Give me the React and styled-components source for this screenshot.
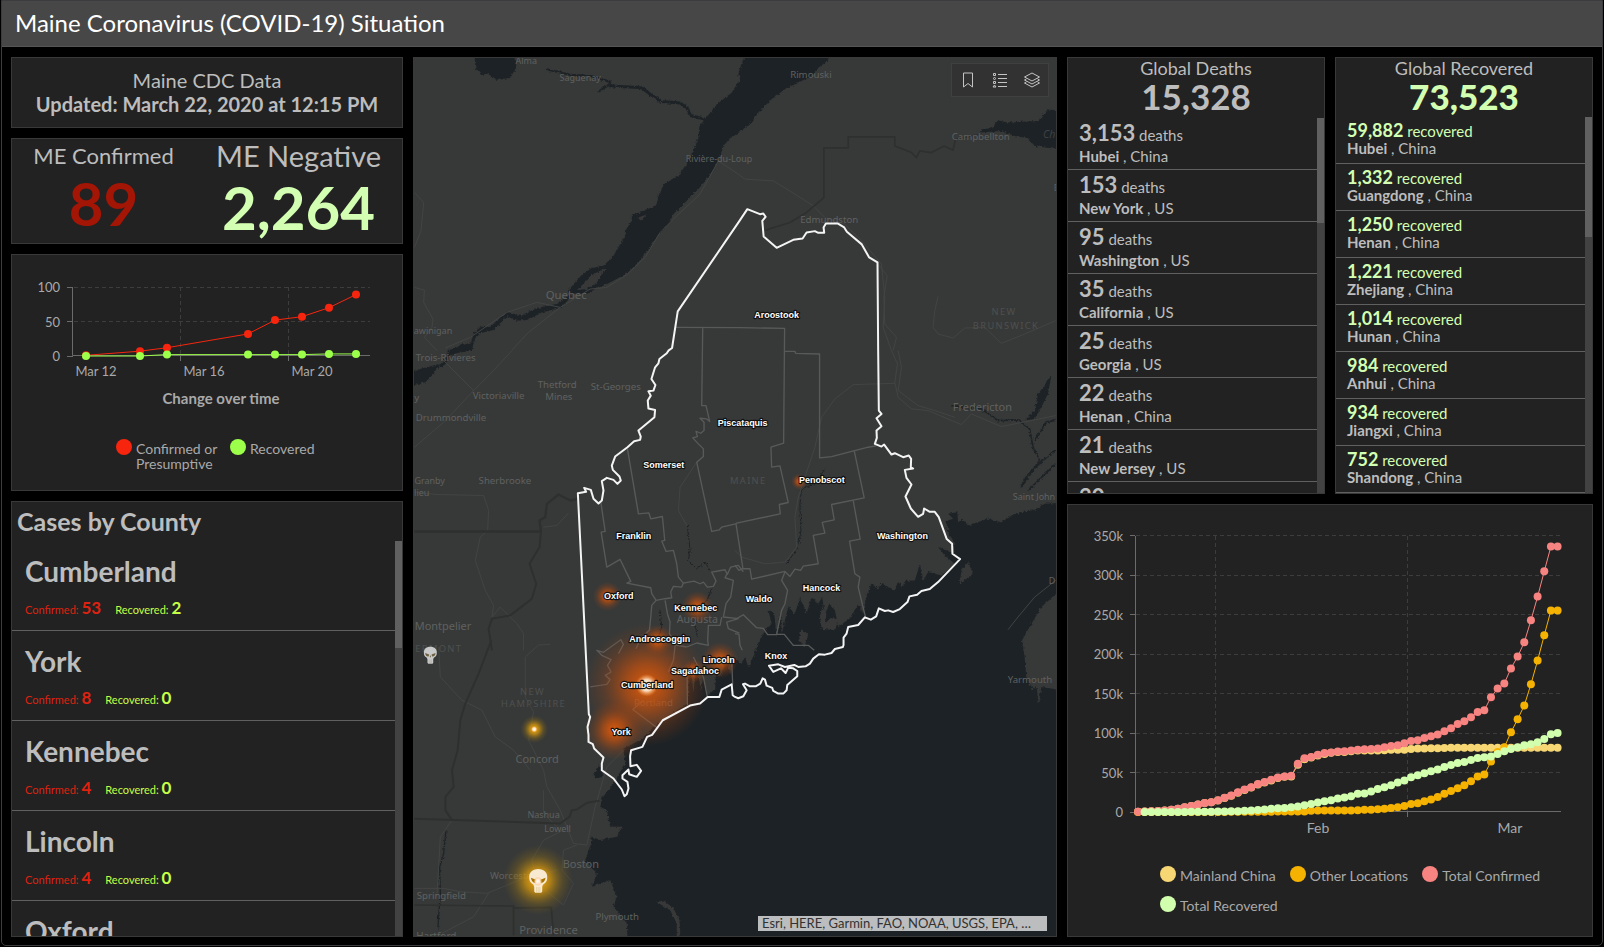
import React from "react";
import styled, { createGlobalStyle, css } from "styled-components";

const GlobalStyle = createGlobalStyle`
  *, *::before, *::after { box-sizing: border-box; }
  body {
    margin: 0;
    background: #000;
    color: #bdbdbd;
    font-family: Lato, "Open Sans", sans-serif;
  }
  h1, h2, h3, p, ul { margin: 0; padding: 0; font-weight: 400; }
  ul { list-style: none; }
`;

/* ---------- page frame ---------- */

const Page = styled.div`
  display: flex;
  height: 100vh;
  min-height: 720px;
  padding: 0 1px 1px;
  background: #000;
`;

const Frame = styled.div`
  flex: 1;
  min-width: 0;
  display: flex;
  flex-direction: column;
  border: 1px solid #3c3c3e;
  border-radius: 0 0 5px 5px;
  overflow: hidden;
`;

const Header = styled.header`
  flex: none;
  padding: 0 13px 2px;
  background: #474747;
  border-bottom: 1px solid #555;
`;

const PageTitle = styled.h1`
  color: #fff;
  font-size: 24px;
  line-height: 43px;
`;

const Board = styled.main`
  flex: 1;
  min-height: 0;
  display: grid;
  grid-template-columns: minmax(0, 392fr) minmax(0, 644fr) minmax(0, 526fr);
  gap: 10px;
  padding: 10px 9px 8px;
`;

const Column = styled.div`
  display: grid;
  grid-template-rows: ${(p) => p.$rows};
  gap: 10px;
  min-height: 0;
`;

const Split = styled.div`
  display: grid;
  grid-template-columns: minmax(0, 1fr) minmax(0, 1fr);
  gap: 10px;
  min-height: 0;
`;

const Panel = styled.section`
  display: flex;
  flex-direction: column;
  min-width: 0;
  min-height: 0;
  overflow: hidden;
  background: #222;
  border: 1px solid #393939;
`;

/* ---------- summary panels ---------- */

const UpdatedPanel = styled(Panel)`
  justify-content: center;
  padding-bottom: 2px;
  text-align: center;
`;

const SummaryText = styled.p`
  font-size: 20px;
  line-height: 24px;
  font-weight: ${(p) => (p.$strong ? 700 : 400)};
`;

const CountsPanel = styled(Panel)`
  flex-direction: row;
  padding-top: 3px;
`;

const Count = styled.div`
  flex: ${(p) => p.$share} 1 0;
  text-align: center;
`;

const CountLabel = styled.h2`
  font-size: ${(p) => (p.$large ? 29 : 22)}px;
  line-height: 28px;
`;

const CountValue = styled.p`
  font-size: 60px;
  font-weight: 700;
  line-height: ${(p) => (p.$large ? 74 : 66)}px;
  color: ${(p) => p.$color};
`;

/* ---------- scrolling lists ---------- */

const ScrollArea = styled.div`
  flex: 1;
  min-height: 0;
  display: flex;
`;

const Rows = styled.ul`
  flex: 1;
  min-width: 0;
  overflow: hidden;
`;

const Track = styled.div`
  flex: none;
  width: 7px;
  background: #424242;
`;

const Thumb = styled.div`
  height: ${(p) => p.$size}%;
  background: #606060;
`;

const ListTitle = styled.h2`
  flex: none;
  padding: 0 5px;
  font-size: 25px;
  font-weight: 700;
  line-height: 39px;
`;

const CountyRow = styled.li`
  padding: 13px 13px 10px;
  border-bottom: 1px solid #606060;
`;

const CountyName = styled.h3`
  font-size: 28px;
  font-weight: 700;
  line-height: 34px;
`;

const CountyStats = styled.p`
  display: flex;
  align-items: baseline;
  gap: 14px;
  margin-top: 12px;
  font-size: 11px;
  line-height: 20px;
`;

const Stat = styled.span`
  color: ${(p) => p.$color};
  b { font-size: 17px; line-height: 0; font-weight: 700; }
`;

const TotalHead = styled.div`
  flex: none;
  text-align: center;
  padding-bottom: ${(p) => (p.$compact ? 3 : 4)}px;
`;

const TotalLabel = styled.h2`
  font-size: 18px;
  line-height: 20px;
`;

const TotalValue = styled.p`
  font-size: 35px;
  line-height: 36px;
  font-weight: ${(p) => (p.$heavy ? 900 : 700)};
  color: ${(p) => p.$color};
`;

const compactRow = css`
  padding: 5px 11px 6px;
  line-height: 17px;
`;

const roomyRow = css`
  padding: 5px 11px 4px;
  line-height: 18px;
`;

const PlaceRow = styled.li`
  ${(p) => (p.$compact ? compactRow : roomyRow)}
  border-bottom: 1px solid #606060;
  font-size: 15px;
  white-space: nowrap;
`;

const PlaceCount = styled.p`
  font-size: 15px;
  line-height: ${(p) => (p.$compact ? 18 : 24)}px;
  color: ${(p) => p.$color};
  b { font-size: ${(p) => (p.$compact ? 18 : 22)}px; line-height: 0; }
`;

/* ---------- charts ---------- */

const Chart = styled.svg`
  flex: 1;
  min-height: 0;
  width: 100%;
  display: block;
  font-size: 13px;
  fill: #a9a9a9;
`;

const Legend = styled.ul`
  flex: none;
  display: flex;
  flex-wrap: wrap;
  gap: 0 ${(p) => p.$gap}px;
  padding: ${(p) => p.$pad};
  font-size: 14px;
  line-height: 15px;
  color: #a9a9a9;
`;

const LegendItem = styled.li`
  display: flex;
  gap: 4px;
  width: ${(p) => p.$width};
  min-height: 30px;
  span { padding-top: 2px; }
`;

const Dot = styled.i`
  flex: none;
  width: 16px;
  height: 16px;
  border-radius: 50%;
  background: ${(p) => p.$color};
`;

/* ---------- map ---------- */

const MapPanel = styled(Panel)`
  position: relative;
  background: #373938;
`;

const MapDrawing = styled.svg`
  width: 100%;
  height: 100%;
  display: block;
`;

const MapTools = styled.div`
  position: absolute;
  top: 5px;
  right: 7px;
  display: flex;
  background: #323232;
  border: 1px solid #404040;
`;

const ToolButton = styled.button`
  display: grid;
  place-items: center;
  width: 32px;
  height: 32px;
  padding: 0;
  border: 0;
  background: transparent;
  color: #c4c4c4;
`;

const Attribution = styled.p`
  position: absolute;
  right: 9px;
  bottom: 5px;
  width: 289px;
  padding: 0 4px;
  overflow: hidden;
  background: #bcbdbe;
  color: #323232;
  font-size: 13px;
  line-height: 15px;
  white-space: nowrap;
`;

/* ---------- data ---------- */

const counties = [
  ["Cumberland", 53, 2],
  ["York", 8, 0],
  ["Kennebec", 4, 0],
  ["Lincoln", 4, 0],
  ["Oxford", 4, 0],
];

const deaths = [
  ["3,153", "Hubei", "China"],
  ["153", "New York", "US"],
  ["95", "Washington", "US"],
  ["35", "California", "US"],
  ["25", "Georgia", "US"],
  ["22", "Henan", "China"],
  ["21", "New Jersey", "US"],
  ["20", "Louisiana", "US"],
];

const recovered = [
  ["59,882", "Hubei", "China"],
  ["1,332", "Guangdong", "China"],
  ["1,250", "Henan", "China"],
  ["1,221", "Zhejiang", "China"],
  ["1,014", "Hunan", "China"],
  ["984", "Anhui", "China"],
  ["934", "Jiangxi", "China"],
  ["752", "Shandong", "China"],
];

const stateDays = [0, 2, 3, 6, 7, 8, 9, 10];
const stateConfirmed = [1, 7, 12, 32, 52, 57, 70, 89];
const stateRecovered = [0, 0, 2, 2, 2, 2, 3, 3];

const totalConfirmed = [
  0.3, 0.5, 0.9, 1.4, 2, 2.8, 4, 6, 7.5, 9.5, 11.4, 12.5, 14.8, 18, 21, 25, 28.5, 31.5, 35.5, 38, 41, 43.8,
  45, 46, 61, 68, 69.6, 72.5, 74.7, 75.5, 76.8, 77, 78, 79, 79.6, 80, 80.6, 82, 83.5, 84.5, 87, 90, 91, 93.7,
  96, 98.3, 102.5, 106, 111.4, 115, 120, 126.6, 129, 145.5, 156.5, 163, 182, 197, 215, 243, 273, 305, 336.5, 336.5,
];
const mainlandChina = [
  0.3, 0.5, 0.9, 1.4, 2, 2.8, 4, 6, 7.5, 9.5, 11.4, 12.5, 14.6, 17.6, 20.6, 24.5, 28, 31, 35, 37.5, 40, 43,
  44.6, 45, 60, 67, 69, 71.5, 73.5, 75, 76, 76.2, 77, 77.8, 78, 78, 78, 78.3, 79, 79, 79, 80, 80.5, 80.5,
  80.7, 80.7, 81, 81.3, 81.3, 81.3, 81.3, 81.3, 81.3, 81.3, 81.3, 81.3, 81.3, 81.3, 81.3, 81.3, 81.3, 81.3, 81.3, 81.3,
];
const otherLocations = [
  0, 0, 0, 0, 0, 0, 0, 0, 0, 0, 0, 0, 0, 0, 0.2, 0.2, 0.3, 0.3, 0.4, 0.4, 0.4, 0.5,
  0.5, 0.5, 0.5, 0.6, 1.5, 2, 2, 2, 2, 2, 2, 2.2, 3, 3, 3.4, 4.2, 5, 6, 7.5, 10, 11, 13.5,
  16, 19, 23, 26.5, 30, 34, 39, 45, 47.5, 64, 76, 82, 101, 117.5, 135, 162, 192, 224, 255.5, 255.5,
];
const totalRecovered = [
  null, 0, 0, 0, 0, 0, 0.1, 0.1, 0.2, 0.2, 0.2, 0.3, 0.5, 0.6, 0.8, 1.1, 1.5, 2, 2.6, 3.2, 4, 4.6,
  5.1, 5.9, 7, 8.5, 10, 12, 13.5, 15, 17, 18.5, 20, 23, 23.5, 26, 29, 31.5, 34, 37.5, 40, 44, 46.5, 49,
  51.5, 54, 57, 59.5, 62, 63.5, 66, 68.5, 69.5, 70.5, 73.5, 77, 80, 82, 84.5, 86, 88.5, 92.5, 98.5, 100,
];

function Series({ x, y, values, color, r }) {
  const points = values.map((v, i) => (v === null ? null : [x(i), y(v)])).filter(Boolean);
  return (
    <g>
      <polyline points={points.map((p) => p.join()).join(" ")} fill="none" stroke={color} />
      {points.map(([cx, cy]) => (
        <circle key={cx} cx={cx} cy={cy} r={r} fill={color} />
      ))}
    </g>
  );
}

const gridLine = { stroke: "#3d3d3d", strokeDasharray: "4 3" };
const axisLine = { stroke: "#6b6b6b" };

function StateChart() {
  const y = (v) => 101 - v * 0.69;
  const x = (i) => 74 + stateDays[i] * 27;
  return (
    <Chart viewBox="0 0 390 172" role="img" aria-label="Change over time">
      {[0, 50, 100].map((v) => {
        const line = Math.round(y(v) - 0.5) + 0.5;
        return (
          <g key={v}>
            {v > 0 && <path d={`M62 ${line}H358`} {...gridLine} />}
            <path d={`M55 ${line}h6`} {...axisLine} />
            <text x="48" y={y(v) + 5} textAnchor="end">{v}</text>
          </g>
        );
      })}
      <path d="M168.500 32V101M276.500 32V101" {...gridLine} />
      <path d="M60.500 32V100.500H358M168.500 101v5M276.500 101v5" fill="none" {...axisLine} />
      <text x="84" y="121" textAnchor="middle">Mar 12</text>
      <text x="192" y="121" textAnchor="middle">Mar 16</text>
      <text x="300" y="121" textAnchor="middle">Mar 20</text>
      <Series x={x} y={y} values={stateConfirmed} color="#f7250e" r="4" />
      <Series x={x} y={y} values={stateRecovered} color="#9cff4a" r="4" />
      <text x="209" y="149" textAnchor="middle" fontSize="15" fontWeight="700">Change over time</text>
    </Chart>
  );
}

function GlobalChart() {
  const y = (v) => 307 - v * 0.789;
  const x = (i) => 70 + i * 6.66;
  return (
    <Chart viewBox="0 0 524 361" role="img" aria-label="Global cases over time">
      {[0, 50, 100, 150, 200, 250, 300, 350].map((v) => {
        const line = Math.round(y(v) - 0.5) + 0.5;
        return (
          <g key={v}>
            {v > 0 && <path d={`M68 ${line}H493`} {...gridLine} />}
            <path d={`M62 ${line}h5`} {...axisLine} />
            <text x="55" y={y(v) + 5} textAnchor="end">{v ? `${v}k` : "0"}</text>
          </g>
        );
      })}
      <path d="M147.500 31V307M339.500 31V307" {...gridLine} />
      <path d="M67.500 31V306.500H493M147.500 307v5M339.500 307v5" fill="none" {...axisLine} />
      <text x="250" y="328" textAnchor="middle" fontSize="14">Feb</text>
      <text x="442" y="328" textAnchor="middle" fontSize="14">Mar</text>
      <Series x={x} y={y} values={mainlandChina} color="#f7d774" r="4" />
      <Series x={x} y={y} values={otherLocations} color="#f5b200" r="4" />
      <Series x={x} y={y} values={totalConfirmed} color="#f78481" r="4" />
      <Series x={x} y={y} values={totalRecovered} color="#d2ffad" r="4" />
    </Chart>
  );
}

/* ---------- map geometry: six sheets, each with its own origin ---------- */

const NW = [-9, -21];
const NE = [966, -21];
const W = [-9, 879];
const E = [966, 879];
const SW = [-9, 1749];
const SE = [966, 1749];

const trace = (...parts) => {
  const pts = [];
  for (let i = 0; i < parts.length; i += 2) {
    const [ox, oy] = parts[i];
    parts[i + 1].trim().split(/\s+/).forEach((pair) => {
      const [px, py] = pair.split(",").map(Number);
      pts.push(`${px + ox} ${py + oy}`);
    });
  }
  return `M${pts.join("L")}`;
};

const stateOutline = trace(
  NE, "37,475 75,490 85,488 92,498 82,510 86,557 125,591 175,567 203,563 215,545 240,541 250,546 268,546 266,530 273,518 308,518 328,530 336,543 380,580 403,620 428,635 430,900",
  E, "432,180 440,190 425,203 440,227 425,240 426,262 420,280 440,288 448,282 470,312 480,308 505,320 522,315 529,325 528,350 535,354 510,358 515,382 530,402 512,438 528,474 550,499 565,490 568,474 585,484 600,484 612,500 636,566 652,580 653,610 676,626 610,695 585,716 560,722 547,733 524,738 518,755 495,776 475,785 460,780 450,782 432,774 424,798 408,808 390,801 370,824 340,830 335,850 326,862 326,884",
  SE, "324,20 300,26 290,38 270,43 252,42 235,55 225,70 212,78 190,80 178,74 150,80 130,72 102,76 115,95 138,84 152,98 160,82 175,84 187,92 187,108 157,134 155,150 145,160 130,160 115,152 112,143 95,136 90,118 83,114 76,130 62,138 45,138 30,130 24,132 35,150 25,168 10,174 0,170",
  SW, "968,165 965,132 935,148 928,170 893,170 870,190 840,196 758,240 726,284 711,290 697,320 663,330 660,348 661,378 680,374 693,392 680,410 657,402 655,388 637,405 637,415 652,425 655,445 650,462 643,468 635,448 610,415 575,390 575,370 580,352 552,325 548,312 535,305 535,285 532,260 540,230 536,222 525,0",
  W, "503,428 528,424 522,412 542,418 550,445 565,459 575,450 580,420 575,392 590,382 610,388 622,400 632,390 628,378 608,358 605,345 615,318 652,290 672,272 690,268 692,258 685,240 733,200 735,178 715,174 713,150 722,135 715,122 730,120 736,103 724,85 735,50 745,38 748,25 770,8 775,0",
  NW, "786,892 803,782 990,508"
) + "Z";

const countyLines = [
  trace(NW, "797,830 990,831", NE, "149,833", E, "146,278 108,290 110,350 135,346 160,456 133,462 136,490 5,518", W, "977,520 935,530 928,538 905,543 860,335 880,318 880,295 865,280 848,262 862,258 858,242 872,248 882,240 882,215 870,203 890,205 899,213 888,165 875,165", NW, "878,832"),
  trace(E, "149,2 180,2 182,8 254,10 254,322 290,318 400,290 424,286"),
  trace(E, "358,300 388,442 290,462 298,508 262,516 270,548 235,555 250,640 205,647 197,660 180,656 165,678 150,663 50,686 45,655 22,655 12,660 0,645"),
  trace(E, "3,520 24,655"),
  trace(E, "355,450 376,566 344,572 360,670 375,680 370,710 382,760 392,800"),
  trace(E, "150,665 140,690 158,720 150,760 140,780 125,852 148,852 175,885 220,885 238,900"),
  trace(E, "0,808 25,793 65,832 85,834 98,853 125,853"),
  trace(E, "0,850 12,852 15,885 22,900"),
  trace(W, "652,295 685,490 716,487 722,505 757,498 764,570 755,572 768,603 790,600 800,640 805,680 820,698 852,692 870,700 880,695 892,710 910,708 918,692 905,665 945,658 952,672 962,650 985,645 1000,664"),
  trace(W, "572,455 585,543 573,545 590,650 630,627 662,693 650,698 722,712 725,730 738,750 765,745 785,742 782,725 790,708 815,710 820,698"),
  trace(W, "738,750 725,765 722,800 718,840 690,865 678,895"),
  trace(W, "765,750 772,790 780,815 778,850 800,885 830,890"),
  trace(W, "950,672 945,682 970,690 962,740 948,760 940,800 985,805 950,815 955,835 988,848"),
  trace(W, "935,800 930,825 895,825 893,870 895,885 860,878 830,890"),
  trace(SW, "540,140 590,132 600,118 585,105 603,95 592,75 603,58 575,45 560,30 580,36 632,-2 640,12 625,40"),
  trace(SW, "700,180 668,208 740,262"),
  trace(SW, "797,0 790,60 775,95"),
  trace(SW, "831,100 832,195"),
  trace(SW, "850,50 880,110 892,170"),
  trace(SW, "965,60 968,132"),
];

const estuary = trace(
  NE, "285,0 285,25 250,50 230,75 200,90 150,115 110,145 70,185 50,215 5,250",
  NW, "960,262 940,285 930,320 905,365 865,415 835,445 790,490 775,520 745,550 720,590 680,640 650,668 610,690 580,705 555,715 530,730 485,728 480,742 450,772 400,784 350,808 320,810 290,797 250,838 210,848 195,862 185,899 120,912 110,900 182,875 192,845 212,828 240,828 290,783 330,795 380,772 440,760 472,740 478,715 515,672 545,652 580,645 610,615 645,555 648,535 665,510 665,490 680,488 700,480 738,463 748,425 762,400 805,375 825,345 850,300 865,260 868,225 885,205 920,160 965,125 990,85",
  NE, "10,70 15,50 35,0"
) + "Z";

const ocean = trace(
  E, "1010,455 930,460 900,478 860,485 830,495 800,515 760,505 700,525 682,505 670,515 668,485 640,490 655,505 632,512 645,540 630,530 655,570 660,610 610,590 630,615 660,640 620,675 580,665 565,690 555,640 540,690 515,690 500,710 490,690 480,720 440,698 430,715 410,700 395,735 385,790 370,760 350,800 310,830 300,780 285,760 270,790 262,740 250,760 230,740 215,790 195,740 180,790 160,770 140,850 138,790 125,860 118,790 100,780 110,820 90,840 75,870",
  SE, "70,10 50,60 40,80 30,50 20,70 0,55",
  SW, "960,100 950,60 930,110 918,90 915,150 893,165 880,110 872,150 860,60 850,155 840,60 832,190 760,236 720,270 690,300 640,325 645,370 610,430 575,475 570,500 590,510 600,560 635,560 620,590 570,600 545,590 540,620 525,660 560,700 545,740 600,720 620,770 610,800 650,850 655,960",
  SE, "1010,960 1010,155 920,140 912,190 905,135 895,150 875,110 870,50 862,0",
  E, "885,830 920,770 1010,690"
) + "Z";

const landPatches = [
  trace(E, "700,635 715,670 675,700 680,660"),
  trace(NW, "500,718 550,670 588,652 560,695 530,715"),
  trace(NW, "685,500 710,490 690,512"),
  trace(E, "262,770 275,790 270,820 290,800 310,810 300,840 260,835 255,800"),
  trace(E, "200,840 220,850 210,890 190,870"),
];

const waterPatches = [
  trace(NW, "192,0 195,50 215,72 232,68 262,87 300,80 318,50 315,0"),
  trace(NE, "1010,298 930,290 900,285 880,262 840,255 800,240 735,245 740,235 770,232 790,208 820,215 870,212 910,210 940,175 1010,185"),
  trace(W, "-20,75 30,55 85,40 70,70 45,95 -20,110"),
  trace(E, "870,210 900,180 910,130 950,75 940,130 920,170 900,205"),
  trace(SW, "550,400 570,375 580,410 555,415"),
];

const rivers = [
  [trace(NW, "410,55 440,62 480,72 540,75 600,92 598,100 565,122"), 7],
  [trace(NW, "598,104 695,110 720,130 755,152 810,156 830,170 845,195 885,205"), 9],
  [trace(W, "60,60 100,40 115,15 160,-20"), 8],
  [trace(E, "650,165 690,170 740,175 790,210 850,208 885,235 895,290 915,330 860,410"), 5],
  [trace(E, "880,420 963,340"), 5],
  [trace(E, "860,405 880,370 963,297"), 5],
  [trace(E, "900,270 935,215 963,208"), 6],
  [trace(E, "270,355 240,400 200,415 195,460 198,540 190,590 155,640"), 3],
  [trace(W, "832,525 840,600 835,630 860,655 885,635 900,660"), 3],
  [trace(W, "750,780 755,830 742,870"), 3],
  [trace(W, "905,715 890,750 850,790 862,860"), 3],
  [trace(SW, "107,570 100,640 88,680 90,760 82,870"), 4],
];

const borders = [
  [trace(NE, "92,538 165,515 215,485 267,440 267,291 340,291 340,258 480,258 480,285 530,305 545,320 555,300 590,305 628,285 655,298 662,265 735,250"), 5],
  [trace(W, "12,543 392,543 388,510 405,500 410,460 445,432 480,450 503,445"), 7],
  [trace(W, "392,543 388,590 358,640 378,700 365,745 300,795 245,805 235,835 245,900"), 6],
  [trace(SW, "243,0 205,100 165,190 150,240 142,330 125,390 130,440 105,470 105,510 125,540"), 6],
  [trace(SW, "12,536 450,550 478,530 485,510 500,508 530,488 568,482"), 6],
  [trace(SW, "12,795 310,798 310,886"), 5],
  [trace(SW, "310,804 423,802 430,886"), 5],
];

const roads = [
  trace(NW, "12,425 40,455 32,540 12,590"),
  trace(NW, "12,710 42,718 40,755 68,805 65,830 42,860 80,900"),
  trace(NW, "925,330 870,430 800,495 750,545 705,620 650,672 590,710 540,715 450,770 380,755 290,785 180,860 105,892"),
  trace(NW, "450,770 355,845 305,898"),
  trace(NW, "925,330 985,370", NE, "30,385 115,390 180,430 235,465 270,500 330,520 380,570 440,640 450,740 445,830 470,900"),
  trace(NE, "430,640 457,675 447,740 450,820 485,860 475,900"),
  trace(NE, "610,737 600,780 595,830 610,850 655,862 690,832 750,830 800,878 870,850 963,810"),
  trace(E, "470,0 488,40 480,95 490,140 530,175 580,180 680,222 710,190 800,228 963,195"),
  trace(E, "480,98 355,102 300,145 260,200 240,290 220,350 190,440 180,500 185,590 150,635 90,640 20,620 0,600"),
  trace(E, "490,0 500,50 490,120 550,165 600,180 660,200"),
  trace(W, "12,290 100,215 190,120 240,70 305,0"),
  trace(W, "90,20 190,120"),
  trace(W, "12,425 80,432 220,435 235,480 232,540 210,560 195,630 225,720 250,765 245,800"),
  trace(W, "475,488 440,525 400,530"),
  trace(W, "860,335 810,410 805,480 830,525"),
  trace(W, "245,800 270,770 320,820 340,850 340,900"),
  trace(SW, "85,20 90,110 155,180 215,210 255,290 310,330 360,390"),
  trace(SW, "420,12 385,14 345,50 345,170 370,215 355,300 400,390 410,440 450,510 490,610 530,615 555,500 590,380 640,330"),
  trace(SW, "480,560 400,600 365,660 380,730 460,795 490,730 455,690 460,630 500,615"),
  trace(SW, "12,745 100,745 150,755 230,760 340,715 440,690"),
  trace(SW, "235,760 190,830 95,880"),
  trace(SW, "125,540 90,590 85,680 80,760"),
  trace(SW, "400,450 400,520 440,560"),
  trace(E, "820,838 850,800 900,740 963,690"),
];

const places = [
  ["Alma", NW, 348, 39], ["Saguenay", NW, 510, 89], ["Rivière-du-Loup", NW, 927, 332],
  ["Quebec", NW, 468, 745, 34], ["awinigan", NW, 68, 851], ["Rimouski", NE, 228, 80, 29],
  ["Campbellton", NE, 738, 266, 29], ["Edmundston", NE, 283, 518, 29], ["Trois-Rivieres", W, 106, 30, 29],
  ["Victoriaville", W, 265, 144, 29], ["Thetford", W, 441, 113, 29], ["Mines", W, 446, 147, 29],
  ["St-Georges", W, 617, 117, 29], ["y", W, 19, 150, 29], ["Drummondville", W, 122, 212, 29],
  ["Granby", W, 58, 401], ["lieu", W, 34, 437], ["Sherbrooke", W, 284, 399, 29],
  ["Montpelier", W, 98, 838, 33], ["Augusta", W, 862, 817, 32], ["Fredericton", E, 743, 182, 33],
  ["Saint John", E, 898, 449], ["D", E, 952, 702], ["Concord", SW, 381, 368, 33],
  ["Portland", SW, 730, 197, 29], ["Nashua", SW, 400, 534], ["Lowell", SW, 442, 576],
  ["Boston", SW, 512, 684, 33], ["Worcester", SW, 308, 718, 29], ["Springfield", SW, 93, 777, 29],
  ["Plymouth", SW, 621, 841, 29], ["Providence", SW, 415, 881, 34], ["Hartford", SW, 78, 899, 30],
  ["Yarmouth", SE, 886, 129, 29], ["B", NE, 966, 420],
];

const regions = [
  ["NEW", NE, 808, 794], ["BRUNSWICK", NE, 814, 834], ["MAINE", E, 40, 399],
  ["NEW", SW, 367, 165], ["HAMPSHIRE", SW, 370, 199], ["VERMONT", SW, 75, 35],
];

const countyLabels = [
  ["Aroostook", NE, 125, 803], ["Piscataquis", W, 998, 227], ["Somerset", W, 761, 353],
  ["Penobscot", E, 261, 398], ["Franklin", W, 671, 566], ["Washington", E, 503, 566],
  ["Oxford", W, 626, 746], ["Hancock", E, 260, 722], ["Waldo", E, 72, 755],
  ["Kennebec", W, 857, 782], ["Androscoggin", W, 749, 876], ["Lincoln", SW, 926, 68],
  ["Knox", SE, 123, 56], ["Sagadahoc", SW, 855, 101], ["Cumberland", SW, 711, 143],
  ["York", SW, 633, 283],
];

const hotspots = [
  ["hot", SW, 710, 135, 185], ["hot", SW, 612, 270, 88], ["hot", W, 592, 738, 44],
  ["hot", W, 862, 770, 48], ["hot", W, 742, 870, 46], ["hot", SW, 930, 60, 55],
  ["hot", SW, 850, 92, 36], ["hot", E, 193, 393, 24], ["warm", SW, 372, 267, 42],
  ["warm", SW, 383, 720, 105], ["core", SW, 710, 135, 34], ["core", SW, 372, 267, 10],
];

function Skull({ x, y, scale, fill, shade }) {
  return (
    <g transform={`translate(${x} ${y}) scale(${scale})`}>
      <path
        d="M0-36C-18-36-28-25-27-11C-27-3-25 3-19 7C-14 9-12 14-12 20V31L-9 35H9L12 31V20C12 14 14 9 19 7C25 3 27-3 27-11C28-25 18-36 0-36Z"
        fill={fill}
      />
      <path d="M-22-10L-5-3L-7 4C-12 7-20 3-22-10ZM22-10L5-3L7 4C12 7 20 3 22-10ZM-2 3L0 0L2 3V8H-2Z" fill={shade} />
      <path d="M-5 18V34M0 18V34M5 18V34" stroke={shade} strokeOpacity="0.6" fill="none" />
    </g>
  );
}

function MaineMap() {
  return (
    <MapDrawing viewBox="0 0 1932 2637" preserveAspectRatio="xMidYMid slice" role="img" aria-label="Map of Maine counties">
      <defs>
        <filter id="coast" x="-5%" y="-5%" width="110%" height="110%">
          <feTurbulence type="fractalNoise" baseFrequency="0.13" numOctaves="2" seed="4" />
          <feDisplacementMap in="SourceGraphic" scale="11" xChannelSelector="R" yChannelSelector="G" />
        </filter>
        <radialGradient id="hot">
          <stop offset="0" stopColor="#e65c08" stopOpacity="0.95" />
          <stop offset="0.35" stopColor="#d2530a" stopOpacity="0.65" />
          <stop offset="0.7" stopColor="#b8480c" stopOpacity="0.24" />
          <stop offset="1" stopColor="#a8400c" stopOpacity="0" />
        </radialGradient>
        <radialGradient id="warm">
          <stop offset="0" stopColor="#ffb30a" />
          <stop offset="0.35" stopColor="#d8980c" stopOpacity="0.75" />
          <stop offset="0.7" stopColor="#a07810" stopOpacity="0.28" />
          <stop offset="1" stopColor="#806010" stopOpacity="0" />
        </radialGradient>
        <radialGradient id="core">
          <stop offset="0" stopColor="#fff" />
          <stop offset="0.5" stopColor="#ffe9d0" stopOpacity="0.9" />
          <stop offset="1" stopColor="#ff9a40" stopOpacity="0" />
        </radialGradient>
      </defs>

      <g filter="url(#coast)">
        <g fill="#1f2326">
          <path d={estuary} />
          <path d={ocean} />
          {waterPatches.map((d) => <path key={d} d={d} />)}
        </g>
        <g fill="none" stroke="#1f2326" strokeLinejoin="round">
          {rivers.map(([d, w]) => <path key={d} d={d} strokeWidth={w} />)}
        </g>
        <g fill="#373938">
          {landPatches.map((d) => <path key={d} d={d} />)}
          <path d={trace(SW, "735,783 765,785 790,805 808,840 812,895 800,895 800,850 780,810 755,795")} />
        </g>
      </g>

      <g fill="none" stroke="#424443" strokeWidth="3" strokeLinejoin="round">
        {roads.map((d) => <path key={d} d={d} />)}
      </g>
      <g fill="none" stroke="#2e302f" strokeLinejoin="round">
        {borders.map(([d, w]) => <path key={d} d={d} strokeWidth={w} />)}
      </g>
      <g fill="none" stroke="#585a59" strokeWidth="4" strokeLinejoin="round">
        {countyLines.map((d) => <path key={d} d={d} />)}
      </g>

      <g fontFamily="'Noto Sans', 'Open Sans', sans-serif" fill="#5f6160" textAnchor="middle">
        {places.map(([name, [ox, oy], px, py, size = 27]) => (
          <text key={name} x={px + ox} y={py + oy} fontSize={size}>{name}</text>
        ))}
        {regions.map(([name, [ox, oy], px, py]) => (
          <text key={name + py} x={px + ox} y={py + oy} fontSize="28" letterSpacing="4" fill="#4e504f">{name}</text>
        ))}
        <text x={NE[0] + 925} y={NE[1] + 262} fontSize="32" fontStyle="italic" textAnchor="start" fill="#3d4143">Ch</text>
      </g>

      {hotspots.map(([kind, [ox, oy], px, py, r]) => (
        <circle key={`${kind}${px}`} cx={px + ox} cy={py + oy} r={r} fill={`url(#${kind})`} />
      ))}
      <Skull x={SW[0] + 60} y={SW[1] + 45} scale="0.72" fill="#c9c9c9" shade="#6e6040" />
      <Skull x={SW[0] + 384} y={SW[1] + 723} scale="1" fill="#f8ead0" shade="#a87400" />
      <circle cx={SW[0] + 383} cy={SW[1] + 724} r="14" fill="url(#core)" />

      <path d={stateOutline} fill="none" stroke="#f4f4f4" strokeWidth="6" strokeLinejoin="round" />

      <g fontFamily="'Liberation Sans', Arial, sans-serif" fontWeight="700" fontSize="27" textAnchor="middle" fill="#fff" stroke="#111" strokeWidth="7" strokeLinejoin="round" paintOrder="stroke">
        {countyLabels.map(([name, [ox, oy], px, py]) => (
          <text key={name} x={px + ox} y={py + oy}>{name}</text>
        ))}
      </g>
    </MapDrawing>
  );
}

const Icon = ({ children }) => (
  <svg width="16" height="16" viewBox="0 0 16 16" fill="none" stroke="currentColor" aria-hidden="true">{children}</svg>
);

function Toolbar() {
  return (
    <MapTools>
      <ToolButton type="button" aria-label="Bookmarks">
        <Icon><path d="M3.500 1V15L8 11.500L12.500 15V1Z" /></Icon>
      </ToolButton>
      <ToolButton type="button" aria-label="Legend">
        <Icon>
          <path d="M6 2.500H15M6 6.500H15M6 10.500H15M6 14.500H15" />
          <path d="M1.500 1.500h2v2h-2zM1.500 9.500h2v2h-2zM1 15L2.500 13L4 15Z" />
          <circle cx="2.500" cy="6.500" r="1" />
        </Icon>
      </ToolButton>
      <ToolButton type="button" aria-label="Layers">
        <Icon>
          <path d="M8 1L15.500 5L8 9L.5 5Z" />
          <path d="M2.500 6.800L.5 8L8 12L15.500 8L13.500 6.800M2.500 9.800L.5 11L8 15L15.500 11L13.500 9.800" />
        </Icon>
      </ToolButton>
    </MapTools>
  );
}

function Scrolling({ thumb, children }) {
  return (
    <ScrollArea>
      <Rows>{children}</Rows>
      <Track><Thumb $size={thumb} /></Track>
    </ScrollArea>
  );
}

function TotalPanel({ label, total, color, unit, unitColor, places: list, compact, thumb }) {
  return (
    <Panel>
      <TotalHead $compact={compact}>
        <TotalLabel>{label}</TotalLabel>
        <TotalValue $color={color} $heavy={compact}>{total}</TotalValue>
      </TotalHead>
      <Scrolling thumb={thumb}>
        {list.map(([count, place, country]) => (
          <PlaceRow key={place} $compact={compact}>
            <PlaceCount $compact={compact} $color={unitColor}><b>{count}</b> {unit}</PlaceCount>
            <p><b>{place}</b> , {country}</p>
          </PlaceRow>
        ))}
      </Scrolling>
    </Panel>
  );
}

export default function App() {
  return (
    <Page>
      <GlobalStyle />
      <Frame>
        <Header>
          <PageTitle>Maine Coronavirus (COVID-19) Situation</PageTitle>
        </Header>
        <Board>
          <Column $rows="71px 106px minmax(0, 237fr) minmax(0, 436fr)">
            <UpdatedPanel>
              <SummaryText>Maine CDC Data</SummaryText>
              <SummaryText $strong>Updated: March 22, 2020 at 12:15 PM</SummaryText>
            </UpdatedPanel>
            <CountsPanel>
              <Count $share={184}>
                <CountLabel>ME Confirmed</CountLabel>
                <CountValue $color="#a31505">89</CountValue>
              </Count>
              <Count $share={208}>
                <CountLabel $large>ME Negative</CountLabel>
                <CountValue $large $color="#d3ffb2">2,264</CountValue>
              </Count>
            </CountsPanel>
            <Panel>
              <StateChart />
              <Legend $gap={4} $pad="12px 10px 19px 104px">
                <LegendItem $width="110px"><Dot $color="#f7250e" /><span>Confirmed or Presumptive</span></LegendItem>
                <LegendItem><Dot $color="#9cff4a" /><span>Recovered</span></LegendItem>
              </Legend>
            </Panel>
            <Panel>
              <ListTitle>Cases by County</ListTitle>
              <Scrolling thumb={27}>
                {counties.map(([name, confirmed, recoveredCount]) => (
                  <CountyRow key={name}>
                    <CountyName>{name}</CountyName>
                    <CountyStats>
                      <Stat $color="#dd2211">Confirmed: <b>{confirmed}</b></Stat>
                      <Stat $color="#c5ff45">Recovered: <b>{recoveredCount}</b></Stat>
                    </CountyStats>
                  </CountyRow>
                ))}
              </Scrolling>
            </Panel>
          </Column>

          <MapPanel aria-label="Map">
            <MaineMap />
            <Toolbar />
            <Attribution>Esri, HERE, Garmin, FAO, NOAA, USGS, EPA, …</Attribution>
          </MapPanel>

          <Column $rows="minmax(0, 437fr) minmax(0, 433fr)">
            <Split>
              <TotalPanel label="Global Deaths" total="15,328" unit="deaths" places={deaths} thumb={28} />
              <TotalPanel label="Global Recovered" total="73,523" color="#d3ffb2" unit="recovered" unitColor="#d3ffb2" places={recovered} compact thumb={32} />
            </Split>
            <Panel>
              <GlobalChart />
              <Legend $gap={14} $pad="0 20px 10px 92px">
                <LegendItem><Dot $color="#f7d774" /><span>Mainland China</span></LegendItem>
                <LegendItem><Dot $color="#f5b200" /><span>Other Locations</span></LegendItem>
                <LegendItem><Dot $color="#f78481" /><span>Total Confirmed</span></LegendItem>
                <LegendItem><Dot $color="#d2ffad" /><span>Total Recovered</span></LegendItem>
              </Legend>
            </Panel>
          </Column>
        </Board>
      </Frame>
    </Page>
  );
}
